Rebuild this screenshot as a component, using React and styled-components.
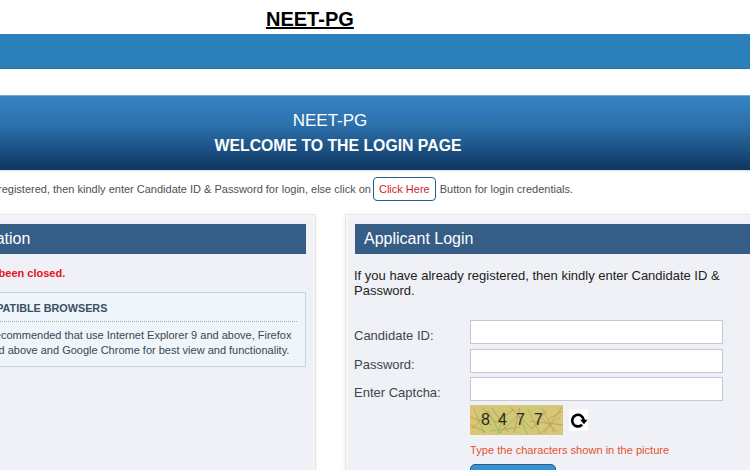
import React from 'react'
import styled, { createGlobalStyle } from 'styled-components'

const GlobalStyle = createGlobalStyle`
  html, body {
    margin: 0;
    background: #fff;
    overflow: hidden;
  }
  body {
    font-family: "Liberation Sans", Arial, sans-serif;
  }
`

const Viewport = styled.div`
  width: 750px;
  height: 470px;
  overflow: hidden;
`

const Canvas = styled.div`
  width: 1076px;
  margin-left: -200px;
`

const Title = styled.h1`
  margin: 0;
  height: 34px;
  padding-left: 466px;
  font-size: 20px;
  line-height: 39px;
  font-weight: 700;
  color: #000;
  text-decoration: underline;
`

const TopBand = styled.div`
  height: 33px;
  background: #2b7fbb;
  border-top: 1px solid #2a86c4;
  border-bottom: 1px solid #2a7096;
`

const Hero = styled.header`
  margin-top: 26px;
  height: 75px;
  box-sizing: border-box;
  border-top: 1px solid #7fa6c8;
  background: linear-gradient(to bottom, #3684c6 0%, #2c70aa 40%, #0e3660 100%);
  color: #fff;
  text-align: center;
  box-shadow: 0 1px 2px rgba(0, 0, 0, 0.15);
`

const HeroTitle = styled.div`
  padding: 15px 16px 0 0;
  font-size: 17px;
  line-height: 20px;
`

const HeroSub = styled.div`
  margin-top: 5px;
  font-size: 15.8px;
  line-height: 20px;
  font-weight: 700;
`

const Notice = styled.p`
  margin: 0;
  height: 44px;
  padding: 7px 0 0 102px;
  box-sizing: border-box;
  font-size: 11px;
  line-height: 24px;
  color: #505050;
  white-space: nowrap;
`

const ClickHere = styled.a`
  display: inline-block;
  height: 22px;
  margin: 0 1px 0 2px;
  padding: 0 5px;
  line-height: 22px;
  color: #d01c2c;
  background: #fff;
  border: 1px solid #2c5c8c;
  border-radius: 4px;
`

const Columns = styled.div`
  display: grid;
  grid-template-columns: 390px 531px;
  column-gap: 29px;
  padding-left: 126px;
`

const Panel = styled.section`
  box-sizing: border-box;
  height: 300px;
  padding: 9px 9px 0;
  background: #f0f1f6;
  border: 1px solid #e6e6e6;
  box-shadow: inset 0 0 4px #fff, 0 0 5px rgba(0, 0, 0, 0.06);
`

const PanelHead = styled.h2`
  margin: 0;
  height: 30px;
  padding-left: 9px;
  font-size: 16px;
  font-weight: 400;
  line-height: 30px;
  color: #fff;
  background: #355d85;
`

const Closed = styled.p`
  margin: 12px 0 0;
  padding-left: 10px;
  font-size: 11px;
  line-height: 14px;
  font-weight: 700;
  color: #e3111b;
`

const InfoBox = styled.div`
  margin-top: 12px;
  height: 75px;
  box-sizing: border-box;
  padding: 8px 8px 0 34px;
  background: #eef5fb;
  border: 1px solid #c3d3e0;
`

const InfoTitle = styled.h3`
  margin: 0;
  padding: 0 0 6px;
  font-size: 10.8px;
  line-height: 14px;
  font-weight: 700;
  color: #3c4f63;
  border-bottom: 1px dotted #a8a8a8;
`

const InfoText = styled.p`
  margin: 6px 0 0;
  font-size: 11px;
  line-height: 15px;
  color: #3d4650;
  white-space: nowrap;
`

const Intro = styled.p`
  margin: 14px 0 0 -1px;
  width: 380px;
  font-size: 13px;
  line-height: 15px;
  color: #222;
`

const LoginForm = styled.form`
  display: grid;
  grid-template-columns: 116px 253px;
  grid-auto-rows: 24px;
  row-gap: 4.5px;
  margin: 22px 0 0 -1px;
`

const Label = styled.label`
  font-size: 13px;
  line-height: 31px;
  color: #3c4650;
`

const Field = styled.input`
  box-sizing: border-box;
  width: 253px;
  height: 24px;
  padding: 0 6px;
  background: #fff;
  border: 1px solid #c3c8d4;
`

const CaptchaRow = styled.div`
  grid-column: 2;
  height: 30px;
  margin-top: -0.5px;
  display: flex;
  align-items: center;
  gap: 6px;
`

const RefreshBox = styled.span`
  display: flex;
  align-items: center;
  justify-content: center;
  width: 19px;
  height: 22px;
  background: #fff;
`

const Hint = styled.div`
  grid-column: 2;
  margin-top: 9px;
  font-size: 11.1px;
  line-height: 14px;
  color: #e8502e;
`

const Submit = styled.button`
  grid-column: 2;
  width: 86px;
  height: 30px;
  margin-top: 1px;
  color: #fff;
  font: 13px "Liberation Sans", Arial, sans-serif;
  background: #3b90d2;
  border: 1px solid #22608f;
  border-radius: 5px;
`

const noise = [
  'M2 24 L18 6 L30 28', 'M12 2 L26 18 L44 4', 'M30 28 L48 10 L58 30', 'M40 2 L62 24 L76 6',
  'M58 4 L70 29 L90 12', 'M74 28 L92 2', 'M66 8 L88 28', 'M0 12 L22 20', 'M20 26 L50 22', 'M60 16 L93 20',
  'M4 4 L14 28', 'M22 3 L38 27', 'M34 6 L28 29', 'M50 2 L44 28', 'M72 3 L84 27', 'M0 20 L16 27', 'M78 14 L93 6',
]

const Captcha = () => (
  <svg width="93" height="30" viewBox="0 0 93 30">
    <rect width="93" height="30" fill="#d9c677" />
    <rect x="8" y="2" width="62" height="26" fill="#bfcb70" opacity="0.45" />
    {noise.map((d, i) => (
      <path key={d} d={d} fill="none" strokeWidth="0.7" stroke={i % 2 ? '#c98a58' : '#98ad5a'} />
    ))}
    <g fontFamily="'Liberation Sans', Arial, sans-serif" fontSize="16" fill="#2a2a1c">
      <text x="11" y="20">8</text>
      <text x="28" y="20">4</text>
      <text x="46" y="20">7</text>
      <text x="64" y="20">7</text>
    </g>
  </svg>
)

const RefreshIcon = () => (
  <svg width="21" height="21" viewBox="0 0 18 18">
    <path d="M14 9 A5.5 5.5 0 1 0 12.4 13" fill="none" stroke="#000" strokeWidth="2.5" />
    <path d="M10.6 8.4 L17.6 8.4 L14.2 12.6 Z" fill="#000" />
  </svg>
)

export default function App() {
  return (
    <Viewport>
      <GlobalStyle />
      <Canvas>
        <Title>NEET-PG</Title>
        <TopBand />
        <Hero>
          <HeroTitle>NEET-PG</HeroTitle>
          <HeroSub>WELCOME TO THE LOGIN PAGE</HeroSub>
        </Hero>
        <Notice>
          If you have already registered, then kindly enter Candidate ID &amp; Password for login, else click on
          <ClickHere> Click Here</ClickHere> Button for login credentials.
        </Notice>
        <Columns>
          <Panel>
            <PanelHead>Registration</PanelHead>
            <Closed>Form has been closed.</Closed>
            <InfoBox>
              <InfoTitle>COMPATIBLE BROWSERS</InfoTitle>
              <InfoText>
                It is recommended that use Internet Explorer 9 and above, Firefox
                <br />
                20 and above and Google Chrome for best view and functionality.
              </InfoText>
            </InfoBox>
          </Panel>
          <Panel>
            <PanelHead>Applicant Login</PanelHead>
            <Intro>If you have already registered, then kindly enter Candidate ID &amp; Password.</Intro>
            <LoginForm>
              <Label htmlFor="cid">Candidate ID:</Label>
              <Field id="cid" />
              <Label htmlFor="pwd">Password:</Label>
              <Field id="pwd" type="password" />
              <Label htmlFor="cap">Enter Captcha:</Label>
              <Field id="cap" />
              <CaptchaRow>
                <Captcha />
                <RefreshBox>
                  <RefreshIcon />
                </RefreshBox>
              </CaptchaRow>
              <Hint>Type the characters shown in the picture</Hint>
              <Submit type="button">Login</Submit>
            </LoginForm>
          </Panel>
        </Columns>
      </Canvas>
    </Viewport>
  )
}
